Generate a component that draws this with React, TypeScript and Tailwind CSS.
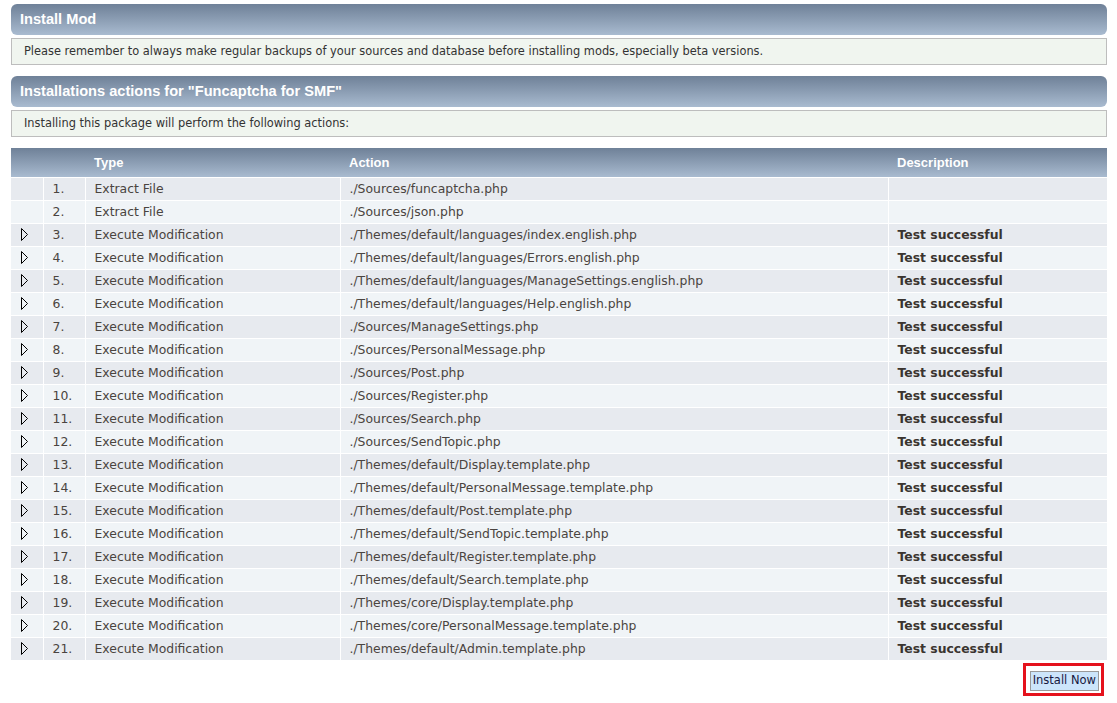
import React from 'react';

const rows: [string, string, string, boolean][] = [
  ['1.', 'Extract File', './Sources/funcaptcha.php', false],
  ['2.', 'Extract File', './Sources/json.php', false],
  ['3.', 'Execute Modification', './Themes/default/languages/index.english.php', true],
  ['4.', 'Execute Modification', './Themes/default/languages/Errors.english.php', true],
  ['5.', 'Execute Modification', './Themes/default/languages/ManageSettings.english.php', true],
  ['6.', 'Execute Modification', './Themes/default/languages/Help.english.php', true],
  ['7.', 'Execute Modification', './Sources/ManageSettings.php', true],
  ['8.', 'Execute Modification', './Sources/PersonalMessage.php', true],
  ['9.', 'Execute Modification', './Sources/Post.php', true],
  ['10.', 'Execute Modification', './Sources/Register.php', true],
  ['11.', 'Execute Modification', './Sources/Search.php', true],
  ['12.', 'Execute Modification', './Sources/SendTopic.php', true],
  ['13.', 'Execute Modification', './Themes/default/Display.template.php', true],
  ['14.', 'Execute Modification', './Themes/default/PersonalMessage.template.php', true],
  ['15.', 'Execute Modification', './Themes/default/Post.template.php', true],
  ['16.', 'Execute Modification', './Themes/default/SendTopic.template.php', true],
  ['17.', 'Execute Modification', './Themes/default/Register.template.php', true],
  ['18.', 'Execute Modification', './Themes/default/Search.template.php', true],
  ['19.', 'Execute Modification', './Themes/core/Display.template.php', true],
  ['20.', 'Execute Modification', './Themes/core/PersonalMessage.template.php', true],
  ['21.', 'Execute Modification', './Themes/default/Admin.template.php', true],
];

function CatBar({ title }: { title: string }) {
  return (
    <div className="h-[31px] rounded-[6px] bg-gradient-to-b from-[#6f8198] to-[#a9bbd0] flex items-center px-[9px]">
      <h3 className="text-[14.6px] font-bold text-white font-['Liberation_Sans',Arial,sans-serif]">{title}</h3>
    </div>
  );
}

function InfoBox({ children }: { children: React.ReactNode }) {
  return (
    <div className="mt-[3px] h-[27px] border border-[#bdbdbd] bg-[#f0f5ef] flex items-center px-[12px] text-[11.4px] text-[#333] font-['DejaVu_Sans',Verdana,sans-serif]">
      {children}
    </div>
  );
}

function Triangle() {
  return (
    <svg width="10" height="15" viewBox="0 0 10 15" className="ml-[9px] block">
      <path d="M1.5 1.5 L1.5 13.5 L7.5 7.5 Z" fill="none" stroke="#000" strokeWidth="1" />
    </svg>
  );
}

export default function App() {
  return (
    <div className="bg-white min-h-[703px] pt-[4px] pl-[11px] pr-[10px] font-['DejaVu_Sans',Verdana,sans-serif]">
      <CatBar title="Install Mod" />
      <InfoBox>Please remember to always make regular backups of your sources and database before installing mods, especially beta versions.</InfoBox>

      <div className="mt-[11px]">
        <CatBar title={'Installations actions for "Funcaptcha for SMF"'} />
        <InfoBox>Installing this package will perform the following actions:</InfoBox>
      </div>

      <table className="mt-[11px] w-full border-collapse text-[12.4px] text-[#4a4440]">
        <thead>
          <tr className="h-[29px] bg-gradient-to-b from-[#6f8198] to-[#a9bbd0] text-white text-[13px] font-bold font-['Liberation_Sans',Arial,sans-serif] text-left">
            <th className="w-[32px]"></th>
            <th className="w-[42px]"></th>
            <th className="w-[255px] pl-[9px]">Type</th>
            <th className="w-[548px] pl-[9px]">Action</th>
            <th className="pl-[9px]">Description</th>
          </tr>
        </thead>
        <tbody>
          {rows.map(([n, type, action, mod], i) => (
            <tr key={n} className={`h-[23px] ${i % 2 === 0 ? 'bg-[#e7eaef]' : 'bg-[#f0f4f7]'}`}>
              <td className="border border-white border-l-0 p-0 align-middle">{mod && <Triangle />}</td>
              <td className="border border-white pl-[9px] pt-[1px]">{n}</td>
              <td className="border border-white pl-[9px] pt-[1px]">{type}</td>
              <td className="border border-white pl-[9px] pt-[1px]">{action}</td>
              <td className="border border-white border-r-0 pl-[9px] pt-[1px] font-bold text-[#3a342f]">{mod ? 'Test successful' : ''}</td>
            </tr>
          ))}
        </tbody>
      </table>

      <div className="flex justify-end mt-[2px] pr-[3px]">
        <div className="flex border-[3px] border-[#e5121c] pl-[4px] pr-[2px] pt-[5px] pb-[2px]">
          <button className="h-[20px] px-[2px] bg-[#cce5fb] border border-[#9a9a9a] text-[11.5px] text-[#18183f] font-['DejaVu_Sans',Tahoma,sans-serif] leading-none">
            Install Now
          </button>
        </div>
      </div>
    </div>
  );
}
